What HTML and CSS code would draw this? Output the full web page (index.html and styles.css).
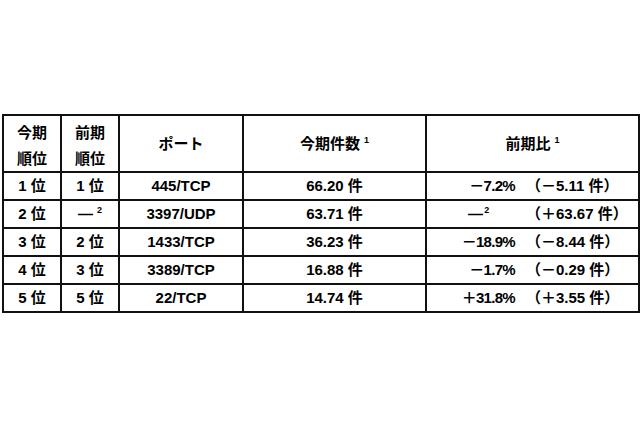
FILE: index.html
```html
<!DOCTYPE html>
<html lang="ja">
<head>
<meta charset="utf-8">
<link rel="stylesheet" href="styles.css">
</head>
<body>
<div class="page">
<table class="rank">
  <colgroup>
    <col class="c1"><col class="c2"><col class="c3"><col class="c4"><col class="c5">
  </colgroup>
  <thead>
    <tr>
      <th><div class="two">今期<br>順位</div></th>
      <th><div class="two">前期<br>順位</div></th>
      <th>ポート</th>
      <th>今期件数<sup>1</sup></th>
      <th>前期比<sup>1</sup></th>
    </tr>
  </thead>
  <tbody>
    <tr>
      <td>1 位</td><td>1 位</td><td>445/TCP</td><td>66.20 件</td>
      <td><div class="cmp"><span class="pct">－7.2%</span><span class="abs">（－5.11 件）</span></div></td>
    </tr>
    <tr>
      <td>2 位</td><td>—<sup>2</sup></td><td>3397/UDP</td><td>63.71 件</td>
      <td><div class="cmp"><span class="pct left">—<sup>2</sup></span><span class="abs">（＋63.67 件）</span></div></td>
    </tr>
    <tr>
      <td>3 位</td><td>2 位</td><td>1433/TCP</td><td>36.23 件</td>
      <td><div class="cmp"><span class="pct">－18.9%</span><span class="abs">（－8.44 件）</span></div></td>
    </tr>
    <tr class="short">
      <td>4 位</td><td>3 位</td><td>3389/TCP</td><td>16.88 件</td>
      <td><div class="cmp"><span class="pct">－1.7%</span><span class="abs">（－0.29 件）</span></div></td>
    </tr>
    <tr>
      <td>5 位</td><td>5 位</td><td>22/TCP</td><td>14.74 件</td>
      <td><div class="cmp"><span class="pct">＋31.8%</span><span class="abs">（＋3.55 件）</span></div></td>
    </tr>
  </tbody>
</table>
</div>
</body>
</html>
```
FILE: styles.css
```css
html, body {
  margin: 0;
  padding: 0;
  background: #fff;
}
.page {
  padding: 114px 0 0 2px;
}
.rank {
  border-collapse: collapse;
  table-layout: fixed;
  width: 636px;
  font-family: "Liberation Sans", "Noto Sans CJK JP", sans-serif;
  font-weight: bold;
  font-size: 15px;
  color: #000;
}
.c1 { width: 58px; }
.c2 { width: 58px; }
.c3 { width: 124px; }
.c4 { width: 183px; }
.c5 { width: 213px; }
.rank th, .rank td {
  border: 2px solid #111;
  padding: 0;
  text-align: center;
  vertical-align: middle;
  font-weight: bold;
  white-space: nowrap;
}
.rank th {
  height: 54px;
  line-height: 26px;
}
.two {
  padding-top: 3px;
  font-family: "Noto Sans CJK JP", sans-serif;
  color: #000;
}
.rank td {
  height: 26px;
  line-height: 26px;
}
.rank tr.short td {
  height: 25px;
}
sup {
  font-size: 9px;
  line-height: 0;
  vertical-align: 6px;
  margin-left: 4px;
}
.cmp {
  display: flex;
  padding-left: 34px;
  text-align: left;
}
.pct {
  width: 54px;
  text-align: right;
  margin-right: 11px;
  letter-spacing: -0.7px;
}
.pct.left {
  text-align: left;
  padding-left: 7px;
  width: 47px;
}
.pct.left sup {
  margin-left: 2px;
}
```
